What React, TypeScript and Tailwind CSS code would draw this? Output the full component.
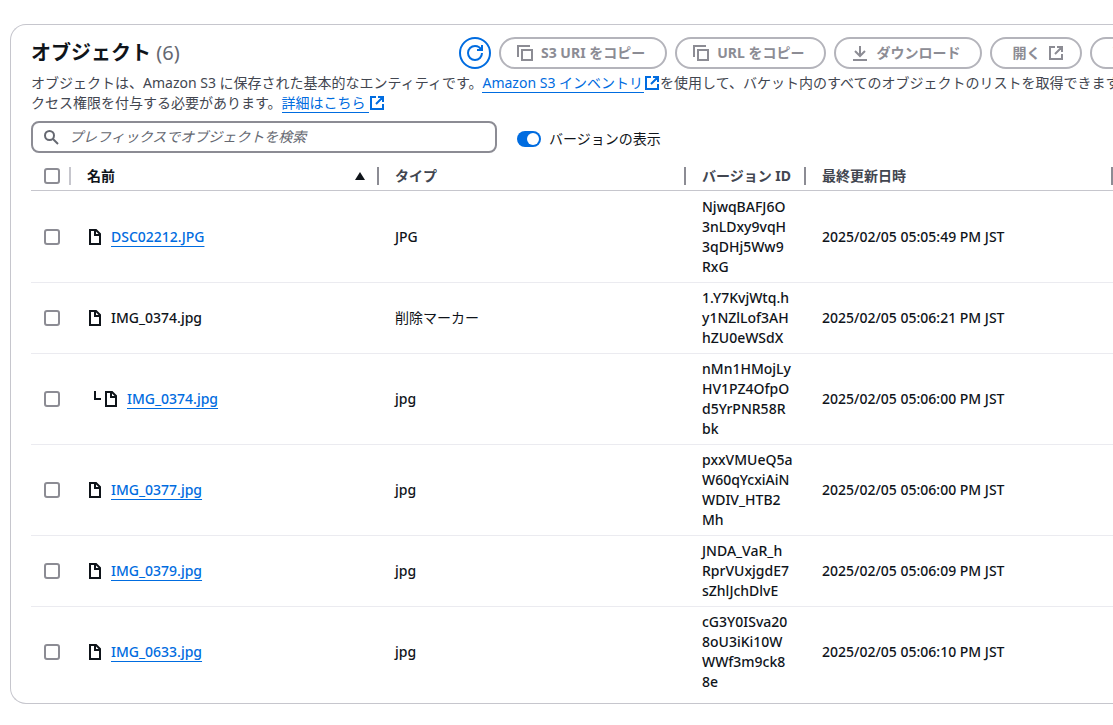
import type { ReactNode } from 'react';

interface S3Object {
  name: string;
  type: string;
  versionId: string[];
  modified: string;
  link?: boolean;
  nested?: boolean;
}

const objects: S3Object[] = [
  { name: 'DSC02212.JPG', type: 'JPG', versionId: ['NjwqBAFJ6O', '3nLDxy9vqH', '3qDHj5Ww9', 'RxG'], modified: '2025/02/05 05:05:49 PM JST', link: true },
  { name: 'IMG_0374.jpg', type: '削除マーカー', versionId: ['1.Y7KvjWtq.h', 'y1NZlLof3AH', 'hZU0eWSdX'], modified: '2025/02/05 05:06:21 PM JST' },
  { name: 'IMG_0374.jpg', type: 'jpg', versionId: ['nMn1HMojLy', 'HV1PZ4OfpO', 'd5YrPNR58R', 'bk'], modified: '2025/02/05 05:06:00 PM JST', link: true, nested: true },
  { name: 'IMG_0377.jpg', type: 'jpg', versionId: ['pxxVMUeQ5a', 'W60qYcxiAiN', 'WDIV_HTB2', 'Mh'], modified: '2025/02/05 05:06:00 PM JST', link: true },
  { name: 'IMG_0379.jpg', type: 'jpg', versionId: ['JNDA_VaR_h', 'RprVUxjgdE7', 'sZhlJchDlvE'], modified: '2025/02/05 05:06:09 PM JST', link: true },
  { name: 'IMG_0633.jpg', type: 'jpg', versionId: ['cG3Y0ISva20', '8oU3iKi10W', 'WWf3m9ck8', '8e'], modified: '2025/02/05 05:06:10 PM JST', link: true },
];

function Icon({ children, className = '' }: { children: ReactNode; className?: string }) {
  return (
    <svg viewBox="0 0 16 16" className={`size-4 shrink-0 overflow-visible fill-none stroke-current stroke-2 ${className}`} aria-hidden="true">
      {children}
    </svg>
  );
}

const RefreshIcon = () => (
  <Icon>
    <path d="M10 5h5V0" />
    <path d="M15 8A7 7 0 1 1 8 1a6.9 6.9 0 0 1 6.3 4" />
  </Icon>
);

const CopyIcon = () => (
  <Icon>
    <path d="M1 12V1h12" />
    <path d="M5 5h10v10H5z" />
  </Icon>
);

const DownloadIcon = () => (
  <Icon>
    <path d="M8 1v9M3 6l5 5 5-5M1 15h14" />
  </Icon>
);

const ExternalIcon = ({ className = '' }: { className?: string }) => (
  <Icon className={className}>
    <path d="M9 2h5v5M7 9l7-7M14 9v5H2V2h5" />
  </Icon>
);

const FileIcon = () => (
  <Icon>
    <path d="M3 1h6l4 4v10H3z" />
    <path d="M8 1v5h5" />
  </Icon>
);

const SearchIcon = ({ className = '' }: { className?: string }) => (
  <Icon className={className}>
    <circle cx="6.5" cy="6.5" r="4.5" />
    <path d="M10 10l5 5" />
  </Icon>
);

function ActionButton({ children, className = 'pl-4 pr-5' }: { children: ReactNode; className?: string }) {
  return (
    <button
      type="button"
      disabled
      className={`flex h-8 shrink-0 items-center gap-2 rounded-full border-2 border-[#b4b4bb] font-bold whitespace-nowrap text-[#8c8c94] ${className}`}
    >
      {children}
    </button>
  );
}

function Checkbox({ label }: { label: string }) {
  return (
    <input
      type="checkbox"
      aria-label={label}
      className="block size-4 appearance-none rounded-[3px] border-2 border-[#8c8c94] bg-white checked:border-[#006ce0] checked:bg-[#006ce0]"
    />
  );
}

function HeaderCell({ children, className = '' }: { children: ReactNode; className?: string }) {
  return (
    <th className={`border-b border-[#c6c6cd] p-0 text-left font-bold ${className}`}>
      <div className="flex h-[18px] items-center justify-between border-r-2 border-[#8c8c94] pr-3 pl-4">{children}</div>
    </th>
  );
}

export default function App() {
  return (
    <div
      lang="ja"
      className="overflow-hidden bg-white pt-6 pl-[10px] font-['Noto_Sans','Noto_Sans_CJK_JP',sans-serif] text-sm leading-5 text-[#0f141a]"
    >
      <section className="rounded-l-2xl border border-r-0 border-[#c6c6cd] pt-3 pb-[6px] pl-5">
        <header className="flex">
          <h2 className="w-[428px] shrink-0 text-xl leading-8 font-bold">
            オブジェクト <span className="font-normal text-[#656871]">(6)</span>
          </h2>
          <div className="flex gap-2">
            <button
              type="button"
              aria-label="更新"
              className="flex size-8 shrink-0 items-center justify-center rounded-full border-2 border-[#006ce0] text-[#006ce0]"
            >
              <RefreshIcon />
            </button>
            <ActionButton>
              <CopyIcon />
              S3 URI をコピー
            </ActionButton>
            <ActionButton>
              <CopyIcon />
              URL をコピー
            </ActionButton>
            <ActionButton>
              <DownloadIcon />
              ダウンロード
            </ActionButton>
            <ActionButton className="pl-5 pr-4">
              開く
              <ExternalIcon />
            </ActionButton>
            <ActionButton className="px-5">削除</ActionButton>
          </div>
        </header>

        <p className="mt-1 whitespace-nowrap text-[#424650]">
          オブジェクトは、Amazon S3 に保存された基本的なエンティティです。
          <a href="#inventory" className="text-[#006ce0]">
            <span className="border-b border-current pr-px">Amazon S3 インベントリ</span>
            <ExternalIcon className="inline-block align-[-3px]" />
          </a>
          を使用して、バケット内のすべてのオブジェクトのリストを取得できます
          <br />
          クセス権限を付与する必要があります。
          <a href="#learn-more" className="text-[#006ce0]">
            <span className="border-b border-current pr-[3px]">詳細はこちら</span>
            <ExternalIcon className="inline-block align-[-3px]" />
          </a>
        </p>

        <div className="mt-2 flex items-end gap-5">
          <label className="flex h-8 w-[466px] items-center gap-[10px] rounded-lg border-2 border-[#8c8c94] px-[10px] text-[#656871]">
            <SearchIcon />
            <input
              type="search"
              aria-label="プレフィックスでオブジェクトを検索"
              placeholder="プレフィックスでオブジェクトを検索"
              className="min-w-0 flex-1 bg-transparent outline-none placeholder:text-[#656871] placeholder:italic"
            />
          </label>
          <label className="flex items-center gap-2 pb-1">
            <input
              type="checkbox"
              role="switch"
              defaultChecked
              className="flex h-4 w-6 appearance-none items-center rounded-full bg-[#8c8c94] px-[2px] before:size-3 before:rounded-full before:bg-white checked:justify-end checked:bg-[#006ce0]"
            />
            バージョンの表示
          </label>
        </div>

        <table className="mt-2 w-full table-fixed border-separate border-spacing-0">
          <thead>
            <tr className="h-[30px] text-[#424650]">
              <th className="w-10 border-b border-[#c6c6cd] p-0">
                <div className="flex h-[18px] items-center border-r-2 border-[#c6c6cd] pl-[13px]">
                  <Checkbox label="すべて選択" />
                </div>
              </th>
              <HeaderCell className="w-[308px] text-[#0f141a]">
                名前
                <svg viewBox="0 0 10 8" className="h-2 w-[10px] fill-current" aria-hidden="true">
                  <path d="M5 0l5 8H0z" />
                </svg>
              </HeaderCell>
              <HeaderCell className="w-[307px]">タイプ</HeaderCell>
              <HeaderCell className="w-[120px] whitespace-nowrap">バージョン ID</HeaderCell>
              <HeaderCell>最終更新日時</HeaderCell>
            </tr>
          </thead>
          <tbody className="font-medium">
            {objects.map((object, index) => (
              <tr key={index} className="*:border-t *:border-[#ebebf0] first:*:border-transparent">
                <td className="py-[5px] pl-[13px]">
                  <Checkbox label={object.name} />
                </td>
                <td className="py-[5px] pl-4">
                  <div className="flex items-center">
                    {object.nested && (
                      <Icon>
                        <path d="M8 0v8h6" />
                      </Icon>
                    )}
                    <FileIcon />
                    {object.link ? (
                      <a href={`#${object.name}`} className="ml-2 text-[#006ce0] underline decoration-1 underline-offset-4">
                        {object.name}
                      </a>
                    ) : (
                      <span className="ml-2">{object.name}</span>
                    )}
                  </div>
                </td>
                <td className={`py-[5px] pl-4 ${object.link ? '' : 'font-normal'}`}>{object.type}</td>
                <td className="py-[5px] pl-4 whitespace-nowrap">
                  {object.versionId.map((line) => (
                    <span key={line} className="block">{line}</span>
                  ))}
                </td>
                <td className="py-[5px] pl-4 whitespace-nowrap">{object.modified}</td>
              </tr>
            ))}
          </tbody>
        </table>
      </section>
    </div>
  );
}
